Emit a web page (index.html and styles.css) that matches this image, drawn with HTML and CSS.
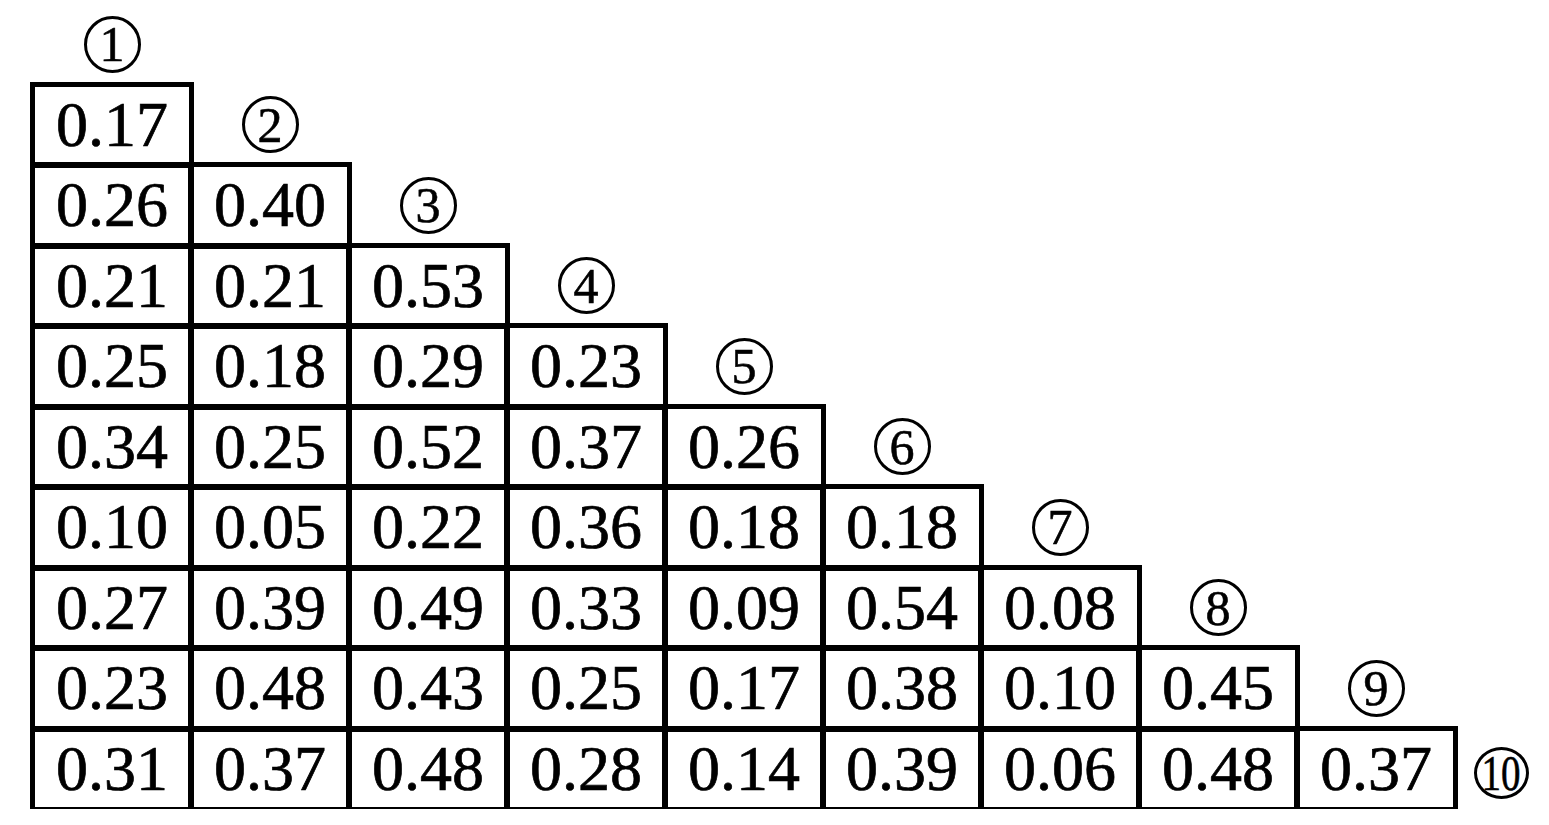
FILE: index.html
```html
<!DOCTYPE html>
<html lang="en">
<head>
    <meta charset="UTF-8">
    <title>Distance Triangle</title>
    <link rel="stylesheet" href="styles.css">
</head>
<body>
    <div class="triangle">
        <div class="col">
            <div class="label"><span class="circle">1</span></div>
            <div class="cell">0.17</div>
            <div class="cell">0.26</div>
            <div class="cell">0.21</div>
            <div class="cell">0.25</div>
            <div class="cell">0.34</div>
            <div class="cell">0.10</div>
            <div class="cell">0.27</div>
            <div class="cell">0.23</div>
            <div class="cell">0.31</div>
        </div>
        <div class="col">
            <div class="label"><span class="circle">2</span></div>
            <div class="cell">0.40</div>
            <div class="cell">0.21</div>
            <div class="cell">0.18</div>
            <div class="cell">0.25</div>
            <div class="cell">0.05</div>
            <div class="cell">0.39</div>
            <div class="cell">0.48</div>
            <div class="cell">0.37</div>
        </div>
        <div class="col">
            <div class="label"><span class="circle">3</span></div>
            <div class="cell">0.53</div>
            <div class="cell">0.29</div>
            <div class="cell">0.52</div>
            <div class="cell">0.22</div>
            <div class="cell">0.49</div>
            <div class="cell">0.43</div>
            <div class="cell">0.48</div>
        </div>
        <div class="col">
            <div class="label"><span class="circle">4</span></div>
            <div class="cell">0.23</div>
            <div class="cell">0.37</div>
            <div class="cell">0.36</div>
            <div class="cell">0.33</div>
            <div class="cell">0.25</div>
            <div class="cell">0.28</div>
        </div>
        <div class="col">
            <div class="label"><span class="circle">5</span></div>
            <div class="cell">0.26</div>
            <div class="cell">0.18</div>
            <div class="cell">0.09</div>
            <div class="cell">0.17</div>
            <div class="cell">0.14</div>
        </div>
        <div class="col">
            <div class="label"><span class="circle">6</span></div>
            <div class="cell">0.18</div>
            <div class="cell">0.54</div>
            <div class="cell">0.38</div>
            <div class="cell">0.39</div>
        </div>
        <div class="col">
            <div class="label"><span class="circle">7</span></div>
            <div class="cell">0.08</div>
            <div class="cell">0.10</div>
            <div class="cell">0.06</div>
        </div>
        <div class="col">
            <div class="label"><span class="circle">8</span></div>
            <div class="cell">0.45</div>
            <div class="cell">0.48</div>
        </div>
        <div class="col">
            <div class="label"><span class="circle">9</span></div>
            <div class="cell">0.37</div>
        </div>
        <div class="col last">
            <div class="label"><span class="circle ten"><span class="squeeze">10</span></span></div>
        </div>
    </div>
</body>
</html>
```
FILE: styles.css
```css
html, body {
    margin: 0;
    background-color: #fff;
    color: #000;
    font-family: "Liberation Serif", "Times New Roman", serif;
}
.triangle {
    display: flex;
    align-items: flex-end; /* columns step down like stairs */
    padding: 4px 0 0 33px;
}
.col {
    display: flex;
    flex-direction: column;
    width: 158px;
}
.col.last {
    width: 92px;
}
.cell {
    height: 80.5px;
    display: flex;
    justify-content: center;
    align-items: center;
    font-size: 64px;
    line-height: 1;
    -webkit-text-stroke: 0.7px #000; /* print-like heavier strokes */
    outline: 5px solid #000;
    outline-offset: -2.5px; /* shared edges overlap into one line */
}
.label {
    height: 80.5px;
    display: flex;
    justify-content: center;
    align-items: center;
}
.circle {
    box-sizing: border-box;
    width: 57px;
    height: 57px;
    border: 3px solid #000;
    border-radius: 50%;
    display: flex;
    justify-content: center;
    align-items: center;
    font-size: 50px;
    line-height: 1;
    -webkit-text-stroke: 0.6px #000;
}
.circle.ten {
    width: 55px;
    height: 52px;
    margin-top: 8px;
}
.squeeze {
    display: inline-block;
    transform: scaleX(0.78);
}
```
